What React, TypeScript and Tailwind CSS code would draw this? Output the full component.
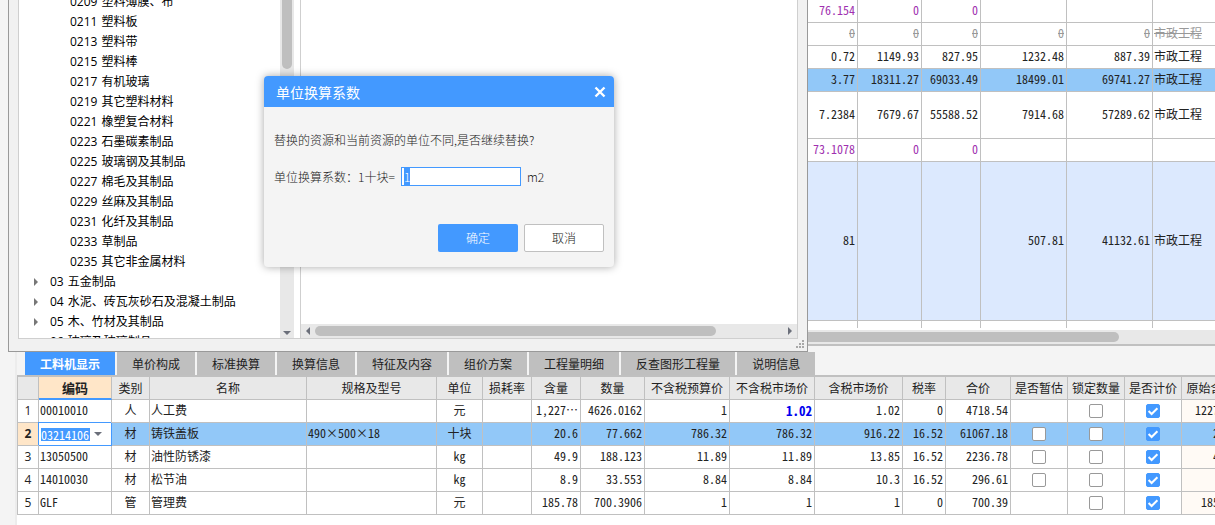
import { useEffect, useRef } from 'react';

type Align = 'left' | 'center' | 'right';

const alignClass: Record<Align, string> = {
  left: 'text-left pl-px pb-[2px]',
  center: 'text-center pb-[2px]',
  right: 'text-right pr-[2px] pb-[2px]',
};

/* ---------- upper grid ---------- */

type PriceRow = {
  cells: string[];
  height: string;
  tone: string;
};

const priceRows: PriceRow[] = [
  { cells: ['76.154', '0', '0', '', '', ''], height: 'h-[23px]', tone: 'bg-white text-[#a030b0]' },
  { cells: ['0', '0', '0', '0', '0', '市政工程'], height: 'h-[23px]', tone: 'bg-white text-[#999999] line-through' },
  { cells: ['0.72', '1149.93', '827.95', '1232.48', '887.39', '市政工程'], height: 'h-[23px]', tone: 'bg-white' },
  { cells: ['3.77', '18311.27', '69033.49', '18499.01', '69741.27', '市政工程'], height: 'h-[23px]', tone: 'bg-[#92c8f8]' },
  { cells: ['7.2384', '7679.67', '55588.52', '7914.68', '57289.62', '市政工程'], height: 'h-[47px]', tone: 'bg-white' },
  { cells: ['73.1078', '0', '0', '', '', ''], height: 'h-[23px]', tone: 'bg-white text-[#a030b0]' },
  { cells: ['81', '', '', '507.81', '41132.61', '市政工程'], height: 'h-[159px]', tone: 'bg-[#dce9fe]' },
];

function PriceGrid() {
  return (
    <table className="w-full table-fixed border-separate border-spacing-0 leading-none">
      <colgroup>
        <col className="w-[841px]" />
        <col className="w-[64px]" />
        <col className="w-[59px]" />
        <col className="w-[86px]" />
        <col className="w-[86px]" />
        <col />
      </colgroup>
      <tbody>
        {priceRows.map((row, r) => (
          <tr key={r} className={row.tone}>
            {row.cells.map((cell, c) => (
              <td
                key={c}
                className={`${row.height} whitespace-nowrap border-b border-[#c0c0c0] ${
                  c === 5 ? alignClass.left : `border-r ${alignClass.right}`
                }`}
              >
                {cell}
              </td>
            ))}
          </tr>
        ))}
        <tr>
          {[0, 1, 2, 3, 4].map((c) => (
            <td key={c} className="h-[7px] border-r border-[#c0c0c0] p-0" />
          ))}
          <td className="p-0" />
        </tr>
      </tbody>
    </table>
  );
}

/* ---------- lower grid ---------- */

type Column = { title: string; width: string; align: Align };

const columns: Column[] = [
  { title: '编码', width: 'w-[73px]', align: 'left' },
  { title: '类别', width: 'w-[38px]', align: 'center' },
  { title: '名称', width: 'w-[157px]', align: 'left' },
  { title: '规格及型号', width: 'w-[130px]', align: 'left' },
  { title: '单位', width: 'w-[46px]', align: 'center' },
  { title: '损耗率', width: 'w-[49px]', align: 'right' },
  { title: '含量', width: 'w-[49px]', align: 'right' },
  { title: '数量', width: 'w-[64px]', align: 'right' },
  { title: '不含税预算价', width: 'w-[85px]', align: 'right' },
  { title: '不含税市场价', width: 'w-[85px]', align: 'right' },
  { title: '含税市场价', width: 'w-[88px]', align: 'right' },
  { title: '税率', width: 'w-[43px]', align: 'right' },
  { title: '合价', width: 'w-[65px]', align: 'right' },
];

type Resource = {
  cells: string[];
  estimate: boolean;
  original: string;
  boldPrice?: boolean;
};

const resources: Resource[] = [
  {
    cells: ['00010010', '人', '人工费', '', '元', '', '1,227…', '4626.0162', '1', '1.02', '1.02', '0', '4718.54'],
    estimate: false,
    original: '1227.06',
    boldPrice: true,
  },
  {
    cells: ['03214106', '材', '铸铁盖板', '490×500×18', '十块', '', '20.6', '77.662', '786.32', '786.32', '916.22', '16.52', '61067.18'],
    estimate: true,
    original: '20.6',
  },
  {
    cells: ['13050500', '材', '油性防锈漆', '', 'kg', '', '49.9', '188.123', '11.89', '11.89', '13.85', '16.52', '2236.78'],
    estimate: true,
    original: '49.9',
  },
  {
    cells: ['14010030', '材', '松节油', '', 'kg', '', '8.9', '33.553', '8.84', '8.84', '10.3', '16.52', '296.61'],
    estimate: true,
    original: '8.9',
  },
  {
    cells: ['GLF', '管', '管理费', '', '元', '', '185.78', '700.3906', '1', '1', '1', '0', '700.39'],
    estimate: false,
    original: '185.78',
  },
];

const SELECTED = 1;

function Check({ label, checked }: { label: string; checked?: boolean }) {
  return (
    <label className="mx-auto grid size-[14px] place-items-center">
      <input
        type="checkbox"
        aria-label={label}
        defaultChecked={checked}
        className="peer col-start-1 row-start-1 size-[14px] appearance-none rounded-[2px] border border-[#999999] bg-white checked:border-[#4399ff] checked:bg-[#4399ff]"
      />
      <svg
        viewBox="0 0 14 14"
        className="pointer-events-none invisible col-start-1 row-start-1 size-[14px] peer-checked:visible"
        fill="none"
        stroke="white"
        strokeWidth="2"
      >
        <path d="M2.6 7 L5.6 10 L11.4 4.2" />
      </svg>
    </label>
  );
}

function ResourceGrid() {
  const cell = 'h-[23px] whitespace-nowrap border-r border-b border-[#c0c0c0]';
  return (
    <table className="w-[1223px] table-fixed border-separate border-spacing-0 border-l border-[#c0c0c0] leading-none">
      <colgroup>
        <col className="w-[21px]" />
        {columns.map((c) => (
          <col key={c.title} className={c.width} />
        ))}
        <col className="w-[57px]" />
        <col className="w-[57px]" />
        <col className="w-[57px]" />
        <col className="w-[58px]" />
      </colgroup>
      <thead>
        <tr className="bg-[#e8e8e8]">
          <th className={`${cell} p-0`} aria-label="序号" />
          {columns.map((c, i) => (
            <th
              key={c.title}
              className={
                i === 0
                  ? 'h-[23px] border-r border-b-2 border-r-[#c0c0c0] border-b-[#4399ff] bg-[#ffe6c8] p-0 text-[13px] font-bold'
                  : `${cell} p-0 font-normal`
              }
            >
              {c.title}
            </th>
          ))}
          <th className={`${cell} p-0 font-normal`}>是否暂估</th>
          <th className={`${cell} p-0 font-normal`}>锁定数量</th>
          <th className={`${cell} p-0 font-normal`}>是否计价</th>
          <th className={`${cell} p-0 font-normal`}>原始含量</th>
        </tr>
      </thead>
      <tbody>
        {resources.map((row, r) => {
          const selected = r === SELECTED;
          return (
            <tr key={r} className={selected ? 'bg-[#92c8f8]' : 'bg-white'}>
              <th
                className={`${cell} p-0 text-center font-['Open_Sans'] ${
                  selected ? 'bg-[#ffe6c8] font-bold' : 'bg-white font-normal'
                }`}
              >
                {r + 1}
              </th>
              {row.cells.map((value, c) =>
                selected && c === 0 ? (
                  <td
                    key={c}
                    className="h-[23px] border-r border-b border-[#4399ff] bg-white p-0 pl-[2px] shadow-[-1px_-1px_0_#4399ff]"
                  >
                    <div className="flex items-center gap-[2px]">
                      <input
                        aria-label="编码"
                        defaultValue={value}
                        className="h-[13px] w-[49px] bg-[#4399ff] text-white outline-none [font-feature-settings:'hwid']"
                      />
                      <button type="button" aria-label="选择编码" className="h-4 w-3">
                        <svg viewBox="0 0 12 16" className="h-4 w-3" fill="#6b6f7a">
                          <path d="M2 6h8L6 10z" />
                        </svg>
                      </button>
                    </div>
                  </td>
                ) : (
                  <td
                    key={c}
                    className={`${cell} ${alignClass[columns[c].align]} ${
                      row.boldPrice && c === 9 ? 'text-[13px] font-bold text-[#0000ee]' : ''
                    }`}
                  >
                    {value}
                  </td>
                ),
              )}
              <td className={`${cell} p-0`}>{row.estimate && <Check label="是否暂估" />}</td>
              <td className={`${cell} p-0`}>
                <Check label="锁定数量" />
              </td>
              <td className={`${cell} p-0`}>
                <Check label="是否计价" checked />
              </td>
              <td className={`${cell} ${alignClass.right} ${selected ? '' : 'bg-[#fffaf5]'}`}>{row.original}</td>
            </tr>
          );
        })}
      </tbody>
    </table>
  );
}

const tabs = ['工料机显示', '单价构成', '标准换算', '换算信息', '特征及内容', '组价方案', '工程量明细', '反查图形工程量', '说明信息'];

function DetailTabs() {
  return (
    <div role="tablist" className="flex gap-[2px] pl-2">
      {tabs.map((tab, i) => (
        <button
          key={tab}
          type="button"
          role="tab"
          aria-selected={i === 0}
          className={`h-[23px] px-[15px] leading-none whitespace-nowrap ${
            i === 0 ? 'bg-[#4399ff] font-bold text-white' : 'bg-[#bfbfbf] text-[#222222]'
          }`}
        >
          {tab}
        </button>
      ))}
    </div>
  );
}

/* ---------- resource window ---------- */

type Entry = { code: string; name: string };

const leaves: Entry[] = [
  { code: '0209', name: '塑料薄膜、布' },
  { code: '0211', name: '塑料板' },
  { code: '0213', name: '塑料带' },
  { code: '0215', name: '塑料棒' },
  { code: '0217', name: '有机玻璃' },
  { code: '0219', name: '其它塑料材料' },
  { code: '0221', name: '橡塑复合材料' },
  { code: '0223', name: '石墨碳素制品' },
  { code: '0225', name: '玻璃钢及其制品' },
  { code: '0227', name: '棉毛及其制品' },
  { code: '0229', name: '丝麻及其制品' },
  { code: '0231', name: '化纤及其制品' },
  { code: '0233', name: '草制品' },
  { code: '0235', name: '其它非金属材料' },
];

const groups: Entry[] = [
  { code: '03', name: '五金制品' },
  { code: '04', name: '水泥、砖瓦灰砂石及混凝土制品' },
  { code: '05', name: '木、竹材及其制品' },
  { code: '06', name: '玻璃及玻璃制品' },
];

function ResourceWindow() {
  return (
    <section
      aria-label="资源库"
      className="absolute top-0 left-2 flex h-[352px] w-[800px] border-x border-b border-[#999999] bg-[#f1f1f1] px-[9px] pb-3"
    >
      <div className="flex flex-1 border-x border-b border-[#cfcfcf] bg-white">
        <div className="flex w-[275px] overflow-hidden">
          <ul className="-mt-2 flex-1 font-['Open_Sans','Noto_Sans_CJK_SC',sans-serif] text-black">
            {leaves.map(({ code, name }) => (
              <li key={code} className="flex h-5 gap-1 pl-[51px] leading-5">
                <span>{code}</span>
                <span>{name}</span>
              </li>
            ))}
            {groups.map(({ code, name }) => (
              <li key={code} className="flex h-5 items-center gap-1 pl-[14px] leading-5">
                <svg viewBox="0 0 13 10" className="h-[10px] w-[13px]" fill="#777777">
                  <path d="M1 1v8l4-4z" />
                </svg>
                <span>{code}</span>
                <span>{name}</span>
              </li>
            ))}
          </ul>
          <div className="flex w-[14px] flex-col items-center justify-between bg-[#e8e8e8]">
            <div className="h-[69px] w-[10px] rounded-b-full bg-[#bfbfbf]" />
            <svg viewBox="0 0 14 12" className="h-3 w-[14px]" fill="#6b6f7a">
              <path d="M3 5h8L7 9z" />
            </svg>
          </div>
        </div>
        <div className="ml-[6px] flex flex-1 flex-col justify-end border-l border-[#cfcfcf]">
          <div className="flex h-[14px] items-center bg-[#e8e8e8]">
            <svg viewBox="0 0 14 14" className="size-[14px]" fill="#6b6f7a">
              <path d="M9 3v8L5 7z" />
            </svg>
            <div className="h-[10px] w-[401px] rounded-full bg-[#bfbfbf]" />
            <svg viewBox="0 0 14 14" className="ml-auto size-[14px]" fill="#6b6f7a">
              <path d="M5 3v8l4-4z" />
            </svg>
          </div>
        </div>
      </div>
      <svg viewBox="0 0 8 8" className="absolute right-[3px] bottom-[3px] size-2" fill="#a8a8a8">
        <path d="M6 0h2v2H6zM3 3h2v2H3zM6 3h2v2H6zM0 6h2v2H0zM3 6h2v2H3zM6 6h2v2H6z" />
      </svg>
    </section>
  );
}

/* ---------- conversion dialog ---------- */

function ConversionDialog() {
  const input = useRef<HTMLInputElement>(null);
  useEffect(() => {
    input.current?.focus();
    input.current?.select();
  }, []);

  return (
    <div
      role="dialog"
      aria-labelledby="dialog-title"
      className="absolute top-[76px] left-[264px] w-[350px] overflow-hidden rounded bg-[#f4f4f4] font-light text-[#222222] shadow-[0_0_8px_rgba(0,0,0,0.35)]"
    >
      <header className="flex h-[31px] items-center justify-between bg-[#4399ff] pr-2 pl-3 text-white">
        <h2 id="dialog-title" className="text-[14px] leading-5 font-normal">
          单位换算系数
        </h2>
        <button type="button" aria-label="关闭" className="size-3">
          <svg viewBox="0 0 12 12" className="size-3" stroke="white" strokeWidth="2.4">
            <path d="M1.5 1.5l9 9M10.5 1.5l-9 9" />
          </svg>
        </button>
      </header>
      <div className="px-[10px] pt-[23px] pb-[15px]">
        <p className="leading-5">替换的资源和当前资源的单位不同,是否继续替换?</p>
        <div className="mt-[17px] flex h-[19px] items-center">
          <label htmlFor="factor" className="w-[127px] whitespace-nowrap">
            单位换算系数：1十块=
          </label>
          <input
            id="factor"
            ref={input}
            defaultValue="1"
            className="h-[19px] w-[120px] border border-[#4399ff] bg-white px-[2px] outline-none selection:bg-[#4399ff] selection:text-white"
          />
          <span className="ml-[6px]">m2</span>
        </div>
        <div className="mt-[38px] flex justify-end gap-[6px]">
          <button type="button" className="h-7 w-20 rounded-[2px] bg-[#4399ff] text-white">
            确定
          </button>
          <button type="button" className="h-7 w-20 rounded-[2px] border border-[#c0c0c0] bg-white">
            取消
          </button>
        </div>
      </div>
    </div>
  );
}

export default function App() {
  return (
    <div
      lang="zh-CN"
      className="relative flex min-h-screen overflow-hidden bg-[#f4f4f4] pl-[15px] font-['Noto_Sans_CJK_SC',sans-serif] text-[12px] text-[#222222]"
    >
      <main className="flex min-w-0 flex-1 flex-col border-l-2 border-[#ececec]">
        <div className="bg-white pb-[2px] [font-feature-settings:'hwid']">
          <PriceGrid />
        </div>
        <div className="flex h-[14px] items-center bg-[#e8e8e8]">
          <div className="h-[10px] w-[1102px] rounded-r-full bg-[#bfbfbf]" />
        </div>
        <div className="border-y-2 border-[#c0c0c0] pt-[6px]">
          <DetailTabs />
        </div>
        <div className="flex-1 overflow-hidden bg-white [font-feature-settings:'hwid']">
          <ResourceGrid />
        </div>
      </main>
      <ResourceWindow />
      <ConversionDialog />
    </div>
  );
}
